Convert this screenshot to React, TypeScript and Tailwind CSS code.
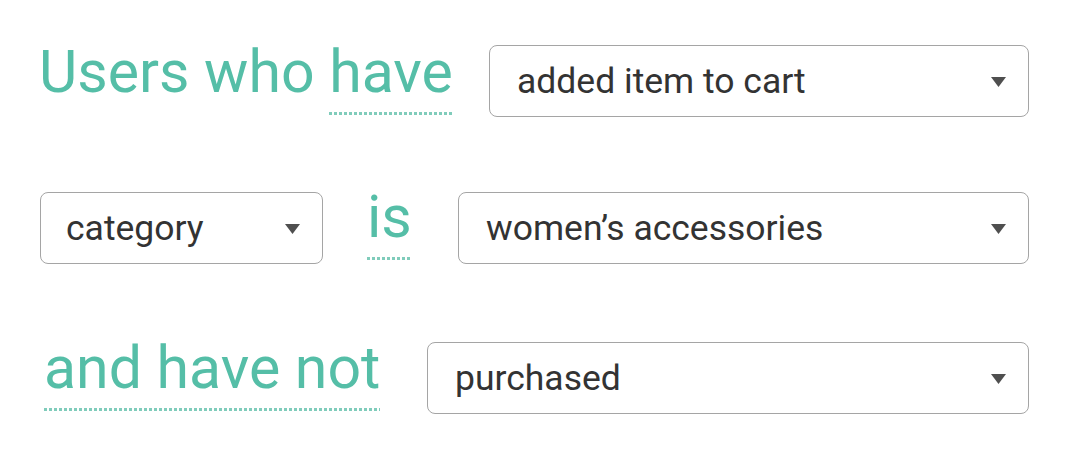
import React from "react";

const dotted =
  "inline-block pb-[13px] bg-[repeating-linear-gradient(90deg,#80ccbb_0_3px,transparent_3px_5px)] bg-[length:100%_3px] bg-bottom bg-no-repeat";

function Caret() {
  return (
    <svg width="15" height="10" viewBox="0 0 15 10" className="mt-[2px] shrink-0">
      <polygon points="0,0 15,0 7.5,10" fill="#4f4f4f" />
    </svg>
  );
}

function Dropdown({ label, width, padLeft = "pl-[27px]" }: { label: string; width: string; padLeft?: string }) {
  return (
    <div
      className={`${width} ${padLeft} flex h-[72px] shrink-0 items-center justify-between rounded-[8px] border border-[#a5a5a5] bg-white pr-[22px] text-[35.5px] leading-none text-[#333333]`}
    >
      <span className="mt-[2px]">{label}</span>
      <Caret />
    </div>
  );
}

export default function App() {
  return (
    <div className="h-[472px] w-[1089px] bg-white pl-[40px] pr-[60px] pt-[42px] font-['Roboto',sans-serif]">
      <div className="flex items-start justify-between">
        <div className="-ml-[1px] text-[59px] leading-[60px] text-[#55bea7]">
          Users who <span className={dotted}>have</span>
        </div>
        <div className="mt-[3px]">
          <Dropdown label="added item to cart" width="w-[540px]" />
        </div>
      </div>

      <div className="mt-[69.5px] flex items-start">
        <div className="mt-[5.5px]">
          <Dropdown label="category" width="w-[283px]" padLeft="pl-[25px]" />
        </div>
        <div className="ml-[44px] text-[59px] leading-[60px] text-[#55bea7]">
          <span className={dotted}>is</span>
        </div>
        <div className="ml-auto mt-[5.5px]">
          <Dropdown label="women’s accessories" width="w-[571px]" />
        </div>
      </div>

      <div className="mt-[73.5px] flex items-start justify-between">
        <div className="ml-[4px] text-[59px] leading-[60px] text-[#55bea7]">
          <span className={dotted}>and have not</span>
        </div>
        <div className="mt-[4.5px]">
          <Dropdown label="purchased" width="w-[602px]" />
        </div>
      </div>
    </div>
  );
}
